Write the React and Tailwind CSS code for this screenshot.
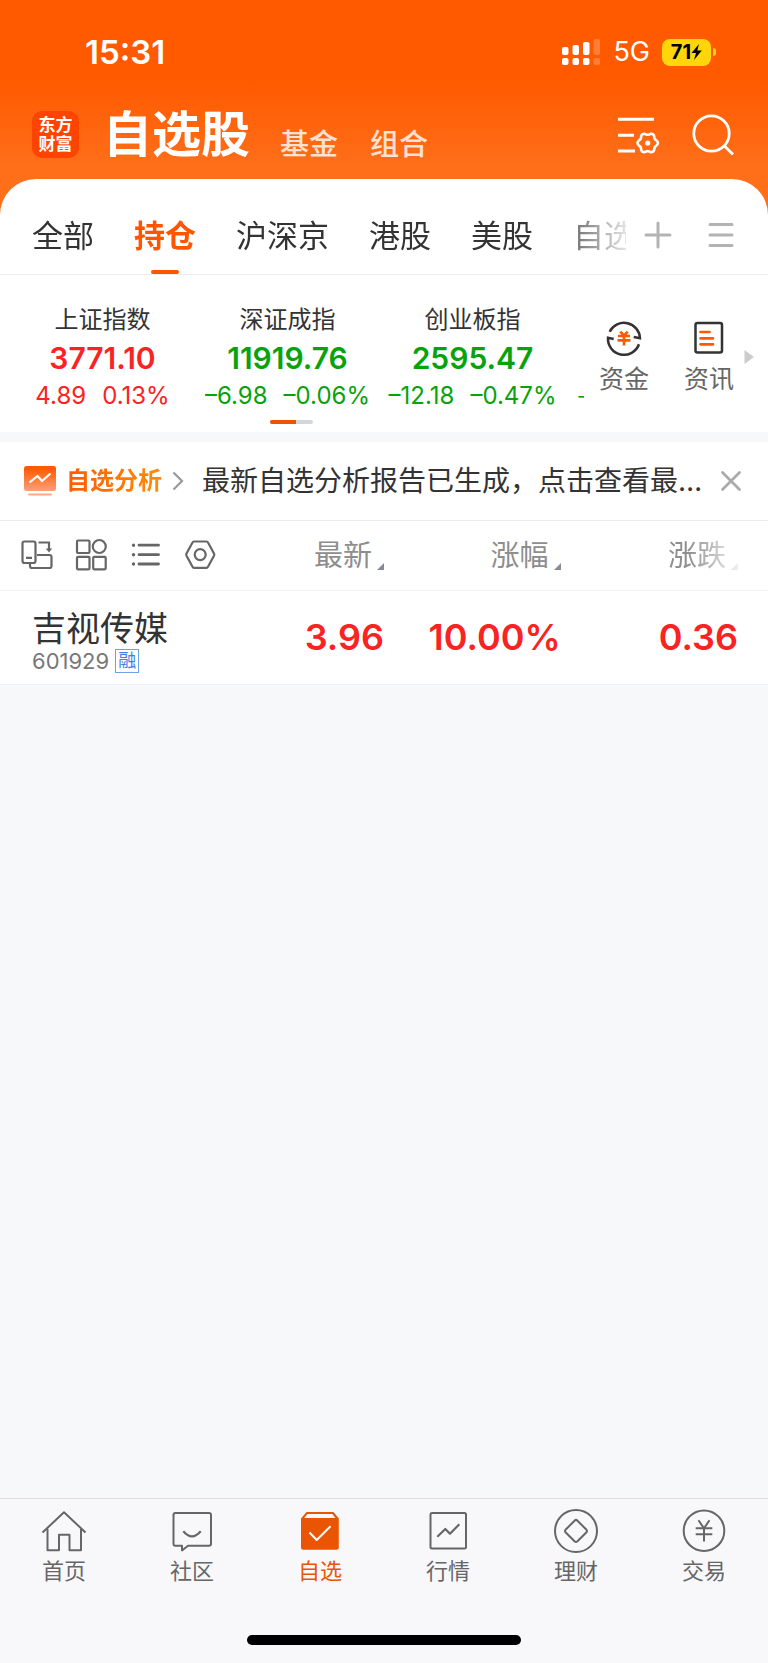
import React, { useState } from "react";

const groups = ["全部", "持仓", "沪深京", "港股", "美股", "自选"];

const indexes = [
  { name: "上证指数", value: "3771.10", change: "4.89", percent: "0.13%", up: true },
  { name: "深证成指", value: "11919.76", change: "–6.98", percent: "–0.06%", up: false },
  { name: "创业板指", value: "2595.47", change: "–12.18", percent: "–0.47%", up: false },
];

const stocks = [
  { name: "吉视传媒", code: "601929", tag: "融", price: "3.96", percent: "10.00%", change: "0.36" },
];

// closed outline of the six-lobed gear
const gearPoints = (cx, cy) =>
  Array.from({ length: 72 }, (_, i) => {
    const a = (i * Math.PI) / 36;
    const r = 9.2 + 1 * Math.cos(6 * a);
    return `${(cx + r * Math.cos(a)).toFixed(2)},${(cy + r * Math.sin(a)).toFixed(2)}`;
  }).join(" ");

const Signal = () => (
  <svg width="40" height="28" viewBox="0 0 40 28" fill="#fff" aria-hidden="true">
    <rect x="1" y="9" width="6.500" height="8" rx="2" />
    <rect x="11.500" y="7" width="6.500" height="10" rx="2" />
    <rect x="22" y="4" width="6.500" height="13" rx="2" />
    <rect x="1" y="20" width="6.500" height="7" rx="2" />
    <rect x="11.500" y="20" width="6.500" height="7" rx="2" />
    <rect x="22" y="20" width="6.500" height="7" rx="2" />
    <g opacity="0.22">
      <rect x="32.500" y="1" width="6.500" height="16" rx="2" />
      <rect x="32.500" y="20" width="6.500" height="7" rx="2" />
    </g>
  </svg>
);

const MenuSettingsIcon = () => (
  <svg width="46" height="44" viewBox="0 0 46 44" fill="none" stroke="#fff" strokeWidth="3" aria-hidden="true">
    <path d="M2 6.300H38M2 22.300H18M2 38H19" />
    <polygon points={gearPoints(31.7, 30)} strokeWidth="2.600" strokeLinejoin="round" />
    <circle cx="31.700" cy="30" r="2.600" fill="#fff" stroke="none" />
  </svg>
);

const SearchIcon = () => (
  <svg width="46" height="46" viewBox="0 0 46 46" fill="none" stroke="#fff" strokeWidth="2.800" aria-hidden="true">
    <circle cx="21.500" cy="21.500" r="17.700" />
    <path d="M34 33.500L43 42.500" />
  </svg>
);

const FundIcon = () => (
  <svg width="40" height="40" viewBox="0 0 40 40" fill="none" stroke="#333" strokeWidth="2.500" aria-hidden="true">
    <path d="M5.700 13.700A16 16 0 0 1 36 20.300L29.700 19" />
    <path d="M9.700 21L4 19.700A16 16 0 0 0 35 26.300" />
    <path d="M16.300 13.700L20 17.700L23.700 13.700M14 18H26M13.500 22.300H26.500M20 18V27.500" stroke="#ff5a00" strokeWidth="2.700" />
  </svg>
);

const NewsIcon = () => (
  <svg width="40" height="40" viewBox="0 0 40 40" fill="none" stroke="#333" strokeWidth="2.500" aria-hidden="true">
    <rect x="6.500" y="5" width="26.500" height="29.500" rx="2" />
    <path d="M11.500 14H20.500M11.500 20.300H24M11.500 26.300H24" stroke="#ff5a00" strokeWidth="2.700" strokeLinecap="round" />
  </svg>
);

const AnalysisIcon = () => (
  <svg width="32" height="32" viewBox="0 0 32 32" fill="none" aria-hidden="true">
    <defs>
      <linearGradient id="analysis" x1="0" y1="0" x2="0" y2="1">
        <stop offset="0.100" stopColor="#ff5a00" />
        <stop offset="1" stopColor="#ffa07a" />
      </linearGradient>
    </defs>
    <rect x="0" y="1" width="32" height="25" rx="2.500" fill="url(#analysis)" />
    <path d="M5.500 17.500L13.500 11L18 16L26.500 8.500" stroke="#fff" strokeWidth="2.200" />
    <path d="M5 29.500H27" stroke="#ffa98a" strokeWidth="2.200" strokeLinecap="round" />
  </svg>
);

const RotateIcon = () => (
  <svg width="34" height="34" viewBox="0 0 34 34" fill="none" stroke="#666" strokeWidth="2.200" aria-hidden="true">
    <rect x="2.500" y="3.500" width="13" height="21.500" rx="2" />
    <path d="M6 19.800H12M18.500 4.500H29V11" />
    <path d="M25.800 10.500H32.200L29 14.500Z" fill="#666" stroke="none" />
    <path d="M10 26V28Q10 30 12 30H29.500Q31.500 30 31.500 28V19Q31.500 17 29.500 17H17" />
  </svg>
);

const GridIcon = () => (
  <svg width="34" height="34" viewBox="0 0 34 34" fill="none" stroke="#666" strokeWidth="2.200" aria-hidden="true">
    <rect x="3" y="2.500" width="12.500" height="12.500" rx="1" />
    <circle cx="25.300" cy="8.500" r="6.500" />
    <rect x="3" y="18.800" width="12.500" height="12.500" rx="1" />
    <rect x="19.200" y="18.800" width="12.500" height="12.500" rx="1" />
  </svg>
);

const ListIcon = () => (
  <svg width="34" height="34" viewBox="0 0 34 34" fill="none" stroke="#666" strokeWidth="2.800" strokeLinecap="round" aria-hidden="true">
    <path d="M5.500 7.200V7.300M5.500 16.600V16.700M5.500 26V26.100" strokeWidth="3.400" />
    <path d="M11 7.200H30.500M11 16.700H30.500M11 26H30.500" />
  </svg>
);

const HexIcon = () => (
  <svg width="34" height="34" viewBox="0 0 34 34" fill="none" stroke="#666" strokeWidth="2.200" strokeLinejoin="round" aria-hidden="true">
    <path d="M12 3.500H24.500Q25.500 3.500 26 4.500L32 15.500Q32.500 16.600 32 17.700L26 28.800Q25.500 29.800 24.500 29.800H12Q11 29.800 10.500 28.800L4.500 17.700Q4 16.600 4.500 15.500L10.500 4.500Q11 3.500 12 3.500Z" />
    <circle cx="18.200" cy="16.600" r="5.500" />
  </svg>
);

const navItems = [
  {
    label: "首页",
    icon: (
      <>
        <path d="M2.500 25.500L24 5.200L45.500 25.500" />
        <path d="M7.500 22V43.300H19V27.700H29.500V43.300H41V22" />
      </>
    ),
  },
  {
    label: "社区",
    icon: (
      <>
        <path d="M7.300 6H41Q43 6 43 8V36.700Q43 38.700 41 38.700H20L14 43.500V38.700H7.300Q5.500 38.700 5.500 36.700V8Q5.500 6 7.300 6Z" />
        <path d="M15.300 24.300Q24 34.500 32.700 24.300" strokeWidth="2.200" />
      </>
    ),
  },
  {
    label: "自选",
    icon: (
      <>
        <path d="M10.500 5H37.500L42.800 11.500V40.500Q42.800 42.800 40.500 42.800H7.300Q5 42.800 5 40.500V11.500Z" fill="#ea5504" stroke="none" />
        <path d="M8.200 11L11.500 7H36.300L39.500 11Z" fill="#f8f8fb" stroke="none" />
        <path d="M13.500 25.500L20.700 33L34.500 19.300" stroke="#fff" />
      </>
    ),
  },
  {
    label: "行情",
    icon: (
      <>
        <rect x="6.500" y="6" width="35.500" height="35.500" rx="1.500" />
        <path d="M13.300 29.700L21.300 22L26 26.700L35.300 17.300" strokeWidth="2.200" />
      </>
    ),
  },
  {
    label: "理财",
    icon: (
      <>
        <circle cx="24" cy="24" r="21" />
        <path d="M22.800 13.500Q24 12.300 25.200 13.500L34.500 22.800Q35.500 24 34.500 25.200L25.200 34.500Q24 35.500 22.800 34.500L13.500 25.200Q12.500 24 13.500 22.800Z" />
      </>
    ),
  },
  {
    label: "交易",
    icon: (
      <>
        <circle cx="24" cy="23.700" r="20.300" />
        <path d="M18.500 13.300L24 21.300L29.500 13.300M15.700 21.300H32.300M15.700 27.300H32.300M24 21.300V34.500" />
      </>
    ),
  },
];

const SortMark = () => (
  <svg width="7" height="7" viewBox="0 0 7 7" className="mb-1 ml-[5px] shrink-0" aria-hidden="true">
    <path d="M7 0V7H0Z" fill="#8a8a94" />
  </svg>
);

const App = () => {
  const [group, setGroup] = useState("持仓");
  const [page, setPage] = useState("自选");
  const [showNotice, setShowNotice] = useState(true);

  return (
    <div className="flex min-h-screen flex-col bg-[#f7f8fa] font-['Inter','Noto_Sans_CJK_SC',sans-serif] text-[#333]">
      <header className="bg-[linear-gradient(#ff5a00_80px,#ff6e19_165px)]">
        <div className="flex h-[102px] items-center justify-between pt-0.5 pr-[52px] pl-[85px] text-white">
          <span className="text-[33px] leading-10 font-semibold">15:31</span>
          <div className="flex items-center">
            <Signal />
            <span className="ml-3 text-[27px] leading-8">5G</span>
            <div className="ml-3 flex items-center">
              <div className="flex h-[27px] w-[49px] items-center justify-center rounded-lg bg-[#ffd60a] text-xl font-bold text-black">
                71
                <svg width="11" height="16" viewBox="0 0 11 16" aria-hidden="true">
                  <path d="M8 0L0.500 9H5L3 16L10.800 6.500H6.300Z" />
                </svg>
              </div>
              <div className="ml-0.5 h-2 w-[3px] rounded-r-full bg-[#ffd60a]" />
            </div>
          </div>
        </div>

        <div className="flex h-[77px] items-center justify-between pr-8 pb-3 pl-8 text-white">
          <div className="flex items-center">
            <div className="flex size-[47px] flex-col items-center justify-center rounded-[10px] bg-[#ff4400] text-[17px] leading-[19px] font-bold">
              <span>东方</span>
              <span>财富</span>
            </div>
            <div className="ml-6 flex items-end">
              <h1 className="text-[49px] leading-[56px] font-bold">自选股</h1>
              <a href="#fund" className="ml-[30px] text-[29px] leading-9 font-medium text-white/80">基金</a>
              <a href="#group" className="ml-8 text-[29px] leading-9 font-medium text-white/80">组合</a>
            </div>
          </div>
          <div className="flex items-center gap-7">
            <button type="button" aria-label="设置">
              <MenuSettingsIcon />
            </button>
            <button type="button" aria-label="搜索">
              <SearchIcon />
            </button>
          </div>
        </div>

        <div className="flex h-24 items-stretch rounded-t-[36px] border-b border-[#ececee] bg-white">
          <div className="flex min-w-0 flex-1 gap-10 overflow-hidden pl-8 [mask-image:linear-gradient(to_left,#0002,#000_80px)]">
            {groups.map((name) => (
              <button
                key={name}
                type="button"
                onClick={() => setGroup(name)}
                className={`relative shrink-0 pt-[18px] text-[31px] leading-10 ${
                  group === name ? "font-bold text-[#ff5500]" : ""
                }`}
              >
                {name}
                {group === name && (
                  <span className="absolute bottom-0 left-1/2 h-1 w-7 -translate-x-1/2 rounded-sm bg-[#ff5500]" />
                )}
              </button>
            ))}
          </div>
          <div className="flex shrink-0 items-center gap-9 pt-4 pr-[34px] pl-[18px]">
            <button type="button" aria-label="添加分组">
              <svg width="28" height="28" viewBox="0 0 28 28" stroke="#b3b3b3" strokeWidth="3" strokeLinecap="round" aria-hidden="true">
                <path d="M2 14H26M14 2V26" />
              </svg>
            </button>
            <button type="button" aria-label="分组管理">
              <svg width="26" height="28" viewBox="0 0 26 28" stroke="#b3b3b3" strokeWidth="3" strokeLinecap="round" aria-hidden="true">
                <path d="M2 3.500H24M2 14H24M2 24.500H24" />
              </svg>
            </button>
          </div>
        </div>
      </header>

      <section className="bg-white pt-[29px] pb-2">
        <div className="flex">
          <div className="flex min-w-0 flex-1 overflow-hidden pl-[10px]">
            {indexes.map((item) => (
              <div
                key={item.name}
                className={`flex w-[185px] shrink-0 flex-col items-center whitespace-nowrap ${
                  item.up ? "text-[#f92323]" : "text-[#08a20b]"
                }`}
              >
                <span className="text-2xl leading-8 text-[#333]">{item.name}</span>
                <span className="mt-1 text-[30px] leading-9 font-semibold">{item.value}</span>
                <span className="mt-1 flex gap-4 text-2xl leading-8">
                  <span>{item.change}</span>
                  <span>{item.percent}</span>
                </span>
              </div>
            ))}
            <span className="shrink-0 self-end pl-3 text-xl leading-8 text-[#08a20b]">-</span>
          </div>
          <div className="flex shrink-0 items-start pt-3.5 pr-[14px] pl-[15px] text-[#666]">
            <button type="button" className="flex flex-col items-center gap-[3px] text-[25px] leading-9">
              <FundIcon />
              资金
            </button>
            <button type="button" className="ml-[35px] flex flex-col items-center gap-[3px] text-[25px] leading-9">
              <NewsIcon />
              资讯
            </button>
            <svg width="10" height="14" viewBox="0 0 10 14" className="mt-8 ml-[10px]" aria-hidden="true">
              <path d="M0.500 0L10 7L0.500 14Z" fill="#ccc" />
            </svg>
          </div>
        </div>
        <div className="mt-2 flex justify-center pr-[186px]">
          <div className="flex h-1 w-[43px] overflow-hidden rounded-full bg-[#d3d6db]">
            <div className="w-[26px] bg-[#ea5504]" />
          </div>
        </div>
      </section>

      {showNotice && (
        <section className="mt-2.5 flex h-[79px] items-center border-b border-[#ececee] bg-white pr-6 pl-6">
          <AnalysisIcon />
          <a href="#analysis" className="ml-2.5 flex shrink-0 items-center">
            <span className="bg-linear-to-r from-[#ff5a00] to-[#ff8c0a] bg-clip-text text-2xl leading-9 font-bold text-transparent">
              自选分析
            </span>
            <svg width="12" height="20" viewBox="0 0 12 20" fill="none" stroke="#999" strokeWidth="2.200" className="ml-[10px]" aria-hidden="true">
              <path d="M1.500 1.500L10 10L1.500 18.500" />
            </svg>
          </a>
          <p className="ml-[18px] min-w-0 flex-1 text-[28px] leading-9 whitespace-nowrap">最新自选分析报告已生成，点击查看最…</p>
          <button type="button" aria-label="关闭" onClick={() => setShowNotice(false)} className="ml-2">
            <svg width="26" height="26" viewBox="0 0 26 26" stroke="#aaa" strokeWidth="2.800" strokeLinecap="round" aria-hidden="true">
              <path d="M4.500 4.500L21.500 21.500M21.500 4.500L4.500 21.500" />
            </svg>
          </button>
        </section>
      )}

      <main className="flex-1">
        <table className="w-full table-fixed bg-white">
          <thead>
            <tr className="h-[69px] border-b border-[#f1f1f3] text-[29px] leading-9 text-[#8e8e8e]">
              <th className="w-[27%] p-0 pl-5">
                <div className="flex gap-5">
                  <button type="button" aria-label="横屏"><RotateIcon /></button>
                  <button type="button" aria-label="宫格"><GridIcon /></button>
                  <button type="button" aria-label="列表"><ListIcon /></button>
                  <button type="button" aria-label="表头设置"><HexIcon /></button>
                </div>
              </th>
              <th className="w-[23%] p-0 font-normal">
                <button type="button" className="flex w-full items-end justify-end pt-0.5">最新<SortMark /></button>
              </th>
              <th className="w-[23%] p-0 font-normal">
                <button type="button" className="flex w-full items-end justify-end pt-0.5">涨幅<SortMark /></button>
              </th>
              <th className="w-[27%] p-0 pr-[30px] font-normal">
                <button type="button" className="flex w-full items-end justify-end pt-0.5 [mask-image:linear-gradient(to_left,#0002,#000_50px)]">
                  涨跌<SortMark />
                </button>
              </th>
            </tr>
          </thead>
          <tbody>
            {stocks.map((stock) => (
              <tr key={stock.code} className="h-[94px] border-b border-[#f1f1f3] text-right text-[36px] font-semibold text-[#f92323]">
                <td className="p-0 pt-2 pl-8 text-left font-normal whitespace-nowrap">
                  <div className="text-[34px] leading-10 text-[#333]">{stock.name}</div>
                  <div className="flex items-center gap-1.5 text-[22px] leading-6 text-[#777]">
                    {stock.code}
                    <span className="flex size-6 items-center justify-center border border-[#6ea2e8] text-lg leading-5 text-[#3f82dc]">
                      {stock.tag}
                    </span>
                  </div>
                </td>
                <td className="p-0">{stock.price}</td>
                <td className="p-0">{stock.percent}</td>
                <td className="p-0 pr-[30px]">{stock.change}</td>
              </tr>
            ))}
          </tbody>
        </table>
      </main>

      <footer className="border-t border-[#dedee1] bg-[#f8f8fb] pt-2 pb-[18px]">
        <nav className="grid grid-cols-6">
          {navItems.map(({ label, icon }) => (
            <a
              key={label}
              href={`#${label}`}
              onClick={() => setPage(label)}
              className={`flex flex-col items-center text-[22px] leading-8 ${
                page === label ? "text-[#ea5504]" : "text-[#666]"
              }`}
            >
              <svg width="48" height="48" viewBox="0 0 48 48" fill="none" stroke="#666" strokeWidth="2" strokeLinejoin="round" aria-hidden="true">
                {icon}
              </svg>
              {label}
            </a>
          ))}
        </nav>
        <div className="mx-auto mt-12 h-[10px] w-[274px] rounded-full bg-black" />
      </footer>
    </div>
  );
};

export default App;
